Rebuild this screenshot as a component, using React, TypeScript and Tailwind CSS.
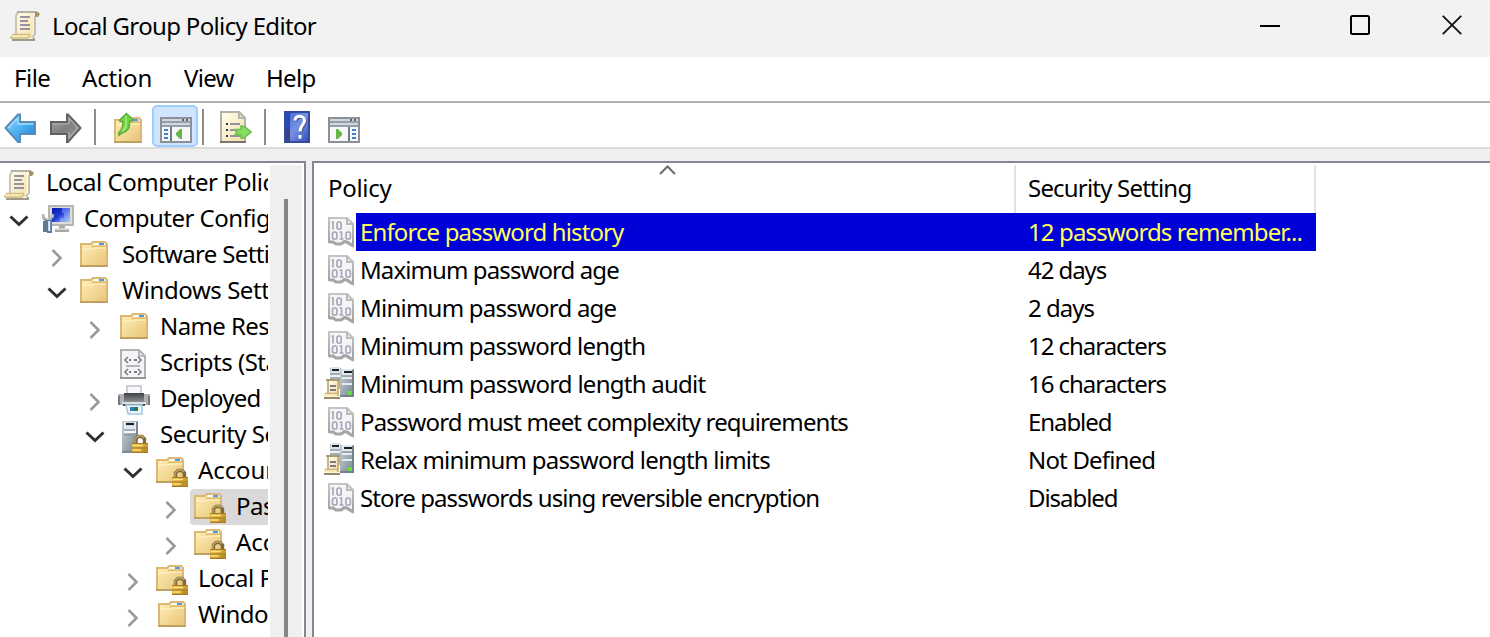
import type { ReactNode } from 'react';

type IconProps = { className?: string };

function Svg({ className = '', w = 32, h = 32, children }: IconProps & { w?: number; h?: number; children: ReactNode }) {
  return (
    <svg className={`block shrink-0 ${className}`} width={w} height={h} viewBox={`0 0 ${w} ${h}`} fill="none">
      {children}
    </svg>
  );
}

function Gradients() {
  return (
    <svg width="0" height="0" className="absolute">
      <defs>
        <linearGradient id="folder" x1="0" y1="0" x2="1" y2="1">
          <stop offset="0" stopColor="#fff0b8" />
          <stop offset="1" stopColor="#e8c478" />
        </linearGradient>
        <linearGradient id="paper" x1="0" y1="0" x2="1" y2="1">
          <stop offset="0" stopColor="#fffef0" />
          <stop offset="1" stopColor="#f5dfa4" />
        </linearGradient>
        <linearGradient id="blueArrow" x1="0" y1="0" x2="1" y2="1">
          <stop offset="0" stopColor="#9ad8fa" />
          <stop offset="0.55" stopColor="#45acf0" />
          <stop offset="1" stopColor="#2a7cd0" />
        </linearGradient>
        <linearGradient id="grayArrow" x1="0" y1="0" x2="1" y2="1">
          <stop offset="0" stopColor="#a4a4a4" />
          <stop offset="0.5" stopColor="#7f7f7f" />
          <stop offset="1" stopColor="#a0a0a0" />
        </linearGradient>
        <linearGradient id="screen" x1="0" y1="0" x2="1" y2="1">
          <stop offset="0" stopColor="#0a18a8" />
          <stop offset="0.45" stopColor="#1838d8" />
          <stop offset="1" stopColor="#b8d0ff" />
        </linearGradient>
        <linearGradient id="server" x1="0" y1="0" x2="1" y2="1">
          <stop offset="0" stopColor="#c9d2da" />
          <stop offset="1" stopColor="#76848f" />
        </linearGradient>
        <linearGradient id="help" x1="0" y1="0" x2="1" y2="1">
          <stop offset="0" stopColor="#3c62d4" />
          <stop offset="0.5" stopColor="#7791e4" />
          <stop offset="1" stopColor="#2746b8" />
        </linearGradient>
        <linearGradient id="gray" x1="0" y1="0" x2="0" y2="1">
          <stop offset="0" stopColor="#c4c4c4" />
          <stop offset="1" stopColor="#a0a0a0" />
        </linearGradient>
        <linearGradient id="gold" x1="0" y1="0" x2="1" y2="1">
          <stop offset="0" stopColor="#f0c850" />
          <stop offset="1" stopColor="#b08020" />
        </linearGradient>
        <linearGradient id="printer" x1="0" y1="0" x2="0" y2="1">
          <stop offset="0" stopColor="#3f4146" />
          <stop offset="1" stopColor="#8b8e94" />
        </linearGradient>
      </defs>
    </svg>
  );
}

function ScrollIcon({ className }: IconProps) {
  return (
    <Svg className={className}>
      <path d="M8 1H25L23 4V22L22 28H6L6 22Z" fill="url(#paper)" />
      <path d="M8 2L6 6V24" stroke="#cdc6b2" strokeWidth="2" />
      <path d="M7 2H27" stroke="#b4b1aa" strokeWidth="2" />
      <path d="M25 2H28L30 4L28 7H25Z" fill="#a8935c" />
      <path d="M25 6V24L22 28" stroke="#c2bfb8" strokeWidth="2" />
      <path d="M1 24H20V28L18 30H3L1 28Z" fill="#fbeebc" />
      <path d="M2 24.5H20M1 26V28H18L20 25" stroke="#d2bd84" strokeWidth="1.6" />
      <path d="M2 30H24V28" stroke="#9d998c" strokeWidth="2" />
      <path d="M10 7H20M10 11H18M10 15H20M10 19H20" stroke="#9692a4" strokeWidth="1.8" />
    </Svg>
  );
}

function FolderShape() {
  return (
    <>
      <path d="M1 3H11L14 1H24L26 3V25H1Z" fill="url(#folder)" />
      <path d="M1 25V3H11L13 1H25L27 3V25" stroke="#dcb872" strokeWidth="2" />
      <path d="M14 2H25V4H13Z" fill="#f9fbf8" />
      <path d="M19 2H24V4H19Z" fill="#4f97e8" />
      <path d="M12 5.5H26" stroke="#dfbb6b" strokeWidth="2" />
      <path d="M2 8H12L14 7H26" stroke="#fff0be" strokeWidth="1.5" />
      <path d="M0 25H28" stroke="#c0a060" strokeWidth="2" />
    </>
  );
}

function FolderIcon({ className }: IconProps) {
  return <Svg className={className}><FolderShape /></Svg>;
}

function Lock() {
  return (
    <>
      <path d="M19.5 21V16L22 13.5H26L28.5 16V21" stroke="#80693a" strokeWidth="3.4" />
      <path d="M19 20V16L22 13H26L28 15" stroke="#c0a668" strokeWidth="1.3" />
      <path d="M16 20H32V30H16Z" fill="url(#gold)" />
      <path d="M16 20.5H32M16 25H32M16 29.5H32" stroke="#a67a22" strokeWidth="1.2" />
      <path d="M17 22.5H27M17 27H25" stroke="#ffdf7a" strokeWidth="1.5" />
    </>
  );
}

function LockedFolderIcon({ className }: IconProps) {
  return <Svg className={className}><FolderShape /><Lock /></Svg>;
}

function ServerLockIcon({ className }: IconProps) {
  return (
    <Svg className={className}>
      <path d="M2 0H18V32H2Z" fill="url(#server)" />
      <path d="M4 1H16V10H4Z" fill="#e4e9ed" />
      <path d="M6 3H14" stroke="#151e26" strokeWidth="2.2" />
      <path d="M4 9H15M4 14H15" stroke="#8c9ba8" strokeWidth="1.5" />
      <path d="M4 11H16" stroke="#f7fafc" strokeWidth="2" />
      <path d="M17 1V16M2 31H18" stroke="#7a8894" strokeWidth="2" />
      <g transform="translate(-4 2)"><Lock /></g>
    </Svg>
  );
}

function ComputerIcon({ className }: IconProps) {
  return (
    <Svg className={className}>
      <path d="M7 1H31V20H7Z" fill="#dcdcd8" stroke="#b6b5b0" strokeWidth="2" />
      <path d="M10 3H28V17H10Z" fill="url(#screen)" />
      <path d="M20 3H28V17H18V13H22V8H20Z" fill="#a7c4ff" opacity=".4" />
      <path d="M17 21H23V24H27V27H13V24H17Z" fill="#a7a7a5" />
      <path d="M14 24H26" stroke="#e0e0df" strokeWidth="1.5" />
      <path d="M1 9V12L4 15V27M11 9V12L8 14V27" stroke="#6e767b" strokeWidth="2.5" />
      <path d="M1 9V12L4 14H8L11 11V9" stroke="#c4c9ca" strokeWidth="1.5" />
      <path d="M1 16H3V27H1ZM5 15H10V28H5Z" fill="#537da9" />
      <path d="M7.2 16V26" stroke="#e4f2ff" strokeWidth="2" />
    </Svg>
  );
}

function ScriptIcon({ className }: IconProps) {
  return (
    <Svg className={className}>
      <path d="M3 1H21L27 7V29H3Z" fill="#f4f4f6" stroke="#b0b0b0" strokeWidth="2" />
      <path d="M2 29H28" stroke="#95959a" strokeWidth="2" />
      <path d="M21 1V7H27" stroke="#b7b7b7" strokeWidth="2" />
      <path d="M10 8L7 11L10 14M20 8L23 11L20 14M10 20L7 23L10 26M20 20L23 23L20 26" stroke="#7c7c86" strokeWidth="1.6" />
      <path d="M11 11H13M16 11H19M11 23H13M16 23H19" stroke="#787882" strokeWidth="2" />
      <path d="M8 17H22" stroke="#aaa8b9" strokeWidth="1.7" />
    </Svg>
  );
}

function PrinterIcon({ className }: IconProps) {
  return (
    <Svg className={className}>
      <path d="M9 1H23V11H9Z" fill="#f8f8fb" stroke="#cfd0d3" strokeWidth="2" />
      <path d="M0 9H7V8H25V9H32V20H0Z" fill="#aeb0b3" />
      <path d="M6 8H26V17H6Z" fill="url(#printer)" />
      <path d="M1 11V20M31 11V20" stroke="#75787d" strokeWidth="2" />
      <path d="M4 18H28" stroke="#dedfe2" strokeWidth="2" />
      <path d="M5 20H27" stroke="#4b4e55" strokeWidth="2" />
      <path d="M8 20H24V29H10Z" fill="#eff7fd" stroke="#a7cadf" strokeWidth="1.6" />
      <path d="M12 22H16V26H12Z" fill="#2b80c4" /><path d="M16 22H20V26H16Z" fill="#287b58" />
    </Svg>
  );
}

function BinaryIcon({ className }: IconProps) {
  return (
    <Svg className={className} w={28}>
      <path d="M1 1H19L25 7V29L20 25L16 24L13 27H8L5 25H1Z" fill="#f5f5f6" stroke="url(#gray)" strokeWidth="2" />
      <path d="M19 1V7H25" stroke="#bababa" strokeWidth="2" />
      <path d="M1 25H5L8 27H13L17 24.5L20 26L25 29" stroke="#a6a6a6" strokeWidth="3" />
      <g stroke="#a6a4b8" strokeWidth="1.6">
        <path d="M3.5 5H5V12.5" />
        <rect x="9" y="5" width="4.2" height="7" rx="1.8" />
        <rect x="4.5" y="15" width="4.4" height="7" rx="1.8" />
        <path d="M11.5 15H13.5V22M11.5 22H15.5" />
        <rect x="18" y="15" width="4.4" height="7" rx="1.8" />
      </g>
    </Svg>
  );
}

function TowersIcon({ className }: IconProps) {
  return (
    <Svg className={className}>
      <path d="M6 1H17V22H6Z" fill="#a9b4bb" />
      <path d="M7 0H16V9H6Z" fill="#dce2e5" />
      <path d="M8 3H15" stroke="#17232c" strokeWidth="2" />
      <path d="M6 7H16M6 11H16" stroke="#a2adb5" strokeWidth="2" />
      <path d="M6 9H16" stroke="#eef3f5" strokeWidth="2" />
      <path d="M16 2H30V30H16Z" fill="url(#server)" />
      <path d="M18 2H28V9H18Z" fill="#e3e8eb" />
      <path d="M20 5H28" stroke="#15212a" strokeWidth="2" />
      <path d="M18 9H28" stroke="#98a5ae" strokeWidth="1.8" />
      <path d="M18 11H28M18 17H28" stroke="#e5ebef" strokeWidth="1.8" />
      <path d="M29 3V29M16 29H30" stroke="#73818b" strokeWidth="2" />
      <path d="M24 24H28V28H24Z" fill="#63e340" />
      <path d="M4 13H14V28H4Z" fill="url(#paper)" stroke="#c8b582" strokeWidth="2" />
      <path d="M2 13H16" stroke="#aa9b75" strokeWidth="2" />
      <path d="M0 28H13" stroke="#fbeab5" strokeWidth="3" />
      <path d="M0 31H16" stroke="#96896a" strokeWidth="2" />
      <path d="M1 26.3H13" stroke="#c2ac74" strokeWidth="1.2" />
      <path d="M6 19H12M6 23H12" stroke="#817a84" strokeWidth="1.8" />
    </Svg>
  );
}

function BackIcon({ className }: IconProps) {
  return <Svg className={className}><path d="M1.5 16L14 2.5H16V10H31V22H16V30H14Z" fill="url(#blueArrow)" stroke="#5a8cb8" strokeWidth="2" /><path d="M4 16L14 6V12H29" stroke="#a6dcfc" strokeWidth="1.3" /></Svg>;
}

function ForwardIcon({ className }: IconProps) {
  return <Svg className={className}><path d="M30.5 16L18 2.5H17V10H1V22H17V30H18Z" fill="url(#grayArrow)" stroke="#626262" strokeWidth="2" /><path d="M3 12H19V6L28 16L19 26V20" stroke="#b0b0b0" strokeWidth="1.2" /></Svg>;
}

function UpFolderIcon({ className }: IconProps) {
  return (
    <Svg className={className} w={30}>
      <g transform="translate(0 5)"><FolderShape /></g>
      <path d="M12.5 1.5L18.5 7V9H15.5V13C15.5 18 11 20 8 21L5 23.5L4.5 21C8 18 9 15 9 9.5H6V7.5Z" fill="#72d34a" stroke="#5cac40" strokeWidth="1.4" />
      <path d="M12 4V12C12 15 10 18 8 19" stroke="#9ce976" strokeWidth="1.8" />
    </Svg>
  );
}

function ConsoleIcon({ className, action = false }: IconProps & { action?: boolean }) {
  return (
    <Svg className={className} h={26}>
      <path d="M1 1H31V25H1Z" fill="#f5f7f9" stroke="#8c9199" strokeWidth="2" />
      <path d="M2 3H30M2 7H30" stroke="#d0d7df" strokeWidth="2" />
      <path d="M2 5H30M2 9H30" stroke="#77828f" strokeWidth="1.7" />
      <path d="M22 3H24M26 3H28" stroke="#56606e" strokeWidth="2" />
      {action ? (
        <>
          <path d="M21 10V24" stroke="#717b87" strokeWidth="2" />
          <path d="M24 13H28M24 17H28M24 21H28" stroke="#477fc0" strokeWidth="2" />
          <path d="M8 12V22H10L14 18V16L10 12Z" fill="#66b84a" />
        </>
      ) : (
        <>
          <path d="M11 10V24" stroke="#717b87" strokeWidth="2" />
          <path d="M4 13H8M4 17H8M4 21H8" stroke="#477fc0" strokeWidth="2" />
          <path d="M22 12V22H20L16 18V16L20 12Z" fill="#66b84a" />
        </>
      )}
    </Svg>
  );
}

function ExportIcon({ className }: IconProps) {
  return (
    <Svg className={className}>
      <path d="M1 1H19L25 7V31H1Z" fill="url(#paper)" stroke="#b2b0a9" strokeWidth="2" />
      <path d="M0 31H26" stroke="#77756c" strokeWidth="2" />
      <path d="M19 1V7H25" stroke="#b8b7b2" strokeWidth="2" />
      <path d="M10 13H20M10 19H16M10 25H20" stroke="#9692a6" strokeWidth="2" />
      <path d="M6 13H8M6 19H8M6 25H8" stroke="#38363e" strokeWidth="2" />
      <path d="M15 18.5H21V15L25 16L31 21L24 27H21V24H15L17 21.5Z" fill="#84df5d" stroke="#6cbc50" strokeWidth="1.6" />
    </Svg>
  );
}

function HelpIcon({ className }: IconProps) {
  return (
    <Svg className={className} w={26}>
      <path d="M0 0H26V32H0Z" fill="url(#help)" />
      <path d="M0 0H6V32H0Z" fill="#2747b5" /><path d="M0 18H6V32H0Z" fill="#3b427e" />
      <path d="M1 1H25V31H1Z" stroke="#314a9e" strokeWidth="2" />
      <path d="M11 9.5C11 3.5 20.500 4 20.500 9.500C20.500 14 16 14 16 20.500" stroke="#515d95" strokeWidth="3" transform="translate(1 1)" />
      <path d="M11 9.5C11 3.5 20.500 4 20.500 9.500C20.500 14 16 14 16 20.500M16 24V27.500" stroke="#fff" strokeWidth="3" />
    </Svg>
  );
}

function Toggle({ open }: { open?: boolean }) {
  if (open === undefined) return null;
  return open ? (
    <svg className="mt-[13px] block" width="20" height="14" viewBox="0 0 20 14" fill="none"><path d="M1.5 2.5L10 10.5L18.5 2.5" stroke="#303030" strokeWidth="3" /></svg>
  ) : (
    <svg className="ml-[4px] mt-[12px] block" width="12" height="18" viewBox="0 0 12 18" fill="none"><path d="M1.500 1L9.500 9L1.500 17" stroke="#9a9a9a" strokeWidth="2.6" /></svg>
  );
}

type TreeItem = { label: string; icon: ReactNode; open?: boolean; indent: string; track: string; selected?: boolean };

const tree: TreeItem[] = [
  { label: 'Local Computer Policy', icon: <ScrollIcon />, indent: 'pl-[4px]', track: 'tracking-[-0.5px]' },
  { label: 'Computer Configuration', icon: <ComputerIcon />, open: true, indent: 'pl-[9px]', track: 'tracking-[-0.5px]' },
  { label: 'Software Settings', icon: <FolderIcon />, open: false, indent: 'pl-[47px]', track: 'tracking-[-0.65px]' },
  { label: 'Windows Settings', icon: <FolderIcon />, open: true, indent: 'pl-[47px]', track: 'tracking-[-0.45px]' },
  { label: 'Name Resolution Policy', icon: <FolderIcon className="translate-x-[2px]" />, open: false, indent: 'pl-[85px]', track: 'tracking-[-0.6px]' },
  { label: 'Scripts (Startup/Shutdown)', icon: <ScriptIcon />, indent: 'pl-[118px]', track: 'tracking-[-0.5px]' },
  { label: 'Deployed Printers', icon: <PrinterIcon />, open: false, indent: 'pl-[85px]', track: 'tracking-[-0.75px]' },
  { label: 'Security Settings', icon: <ServerLockIcon className="translate-x-[2px]" />, open: true, indent: 'pl-[85px]', track: 'tracking-[-0.5px]' },
  { label: 'Account Policies', icon: <LockedFolderIcon />, open: true, indent: 'pl-[123px]', track: 'tracking-[-0.1px]' },
  { label: 'Password Policy', icon: <LockedFolderIcon />, open: false, indent: 'pl-[161px]', track: 'tracking-[-0.5px]', selected: true },
  { label: 'Account Lockout Policy', icon: <LockedFolderIcon />, open: false, indent: 'pl-[161px]', track: 'tracking-[-0.1px]' },
  { label: 'Local Policies', icon: <LockedFolderIcon />, open: false, indent: 'pl-[123px]', track: 'tracking-[-0.5px]' },
  { label: 'Windows Defender Firewall', icon: <FolderIcon className="translate-x-[2px]" />, open: false, indent: 'pl-[123px]', track: 'tracking-[-0.5px]' },
];

type Policy = { name: string; value: string; nt: string; vt: string; tower?: boolean; selected?: boolean };

const policies: Policy[] = [
  { name: 'Enforce password history', value: '12 passwords remember...', nt: 'tracking-[-0.88px]', vt: 'tracking-[-0.88px]', selected: true },
  { name: 'Maximum password age', value: '42 days', nt: 'tracking-[-0.9px]', vt: 'tracking-[-1.07px]' },
  { name: 'Minimum password age', value: '2 days', nt: 'tracking-[-0.77px]', vt: 'tracking-[-1px]' },
  { name: 'Minimum password length', value: '12 characters', nt: 'tracking-[-0.76px]', vt: 'tracking-[-1.04px]' },
  { name: 'Minimum password length audit', value: '16 characters', nt: 'tracking-[-0.74px]', vt: 'tracking-[-1.04px]', tower: true },
  { name: 'Password must meet complexity requirements', value: 'Enabled', nt: 'tracking-[-0.86px]', vt: 'tracking-[-1.07px]' },
  { name: 'Relax minimum password length limits', value: 'Not Defined', nt: 'tracking-[-0.78px]', vt: 'tracking-[-0.82px]', tower: true },
  { name: 'Store passwords using reversible encryption', value: 'Disabled', nt: 'tracking-[-0.9px]', vt: 'tracking-[-1.05px]' },
];

export default function App() {
  return (
    <div className="flex h-[637px] w-[1490px] flex-col overflow-hidden whitespace-nowrap bg-[#efefef] font-['Noto_Sans','Open_Sans',sans-serif] text-[24px] text-black">
      <Gradients />
      <header className="flex h-[57px] shrink-0 bg-[#f2f2f2]">
        <ScrollIcon className="ml-[10px] mt-[10px]" />
        <h1 className="ml-[10px] mt-[7px] leading-[38px] tracking-[-0.66px]">Local Group Policy Editor</h1>
        <div className="ml-auto mr-[28px] mt-[15px] flex">
          <Svg w={20} h={20}><path d="M0 11H20" stroke="#000" strokeWidth="2" /></Svg>
          <Svg className="ml-[70px]" w={20} h={20}><rect x="1" y="1" width="18" height="18" rx="1.5" stroke="#000" strokeWidth="2" /></Svg>
          <Svg className="ml-[72px]" w={20} h={20}><path d="M.8.8L19.2 19.2M19.2.8L.8 19.2" stroke="#111" strokeWidth="1.8" /></Svg>
        </div>
      </header>
      <nav className="flex h-[44px] shrink-0 bg-white pl-[14px] pt-[2px] leading-[38px]">
        <span className="w-[68px] tracking-[-0.5px]">File</span>
        <span className="w-[102px] tracking-[-0.15px]">Action</span>
        <span className="w-[82px] tracking-[-0.7px]">View</span>
        <span className="tracking-[-0.7px]">Help</span>
      </nav>
      <div className="flex h-[48px] shrink-0 border-y-2 border-b-[#dcdcdc] border-t-[#b0b0b2] bg-white">
        <BackIcon className="ml-[4px] mt-[9px]" />
        <ForwardIcon className="ml-[14px] mt-[9px]" />
        <div className="ml-[12px] mt-[6px] h-[36px] w-[2px] bg-[#8c8c8c]" />
        <UpFolderIcon className="ml-[18px] mt-[9px]" />
        <div className="ml-[8px] mt-[2px] h-[42px] w-[46px] rounded-[5px] border-2 border-[#a0cefc] bg-[#d0e5fd] pl-[6px] pt-[10px]"><ConsoleIcon /></div>
        <div className="ml-[4px] mt-[6px] h-[36px] w-[2px] bg-[#8c8c8c]" />
        <ExportIcon className="ml-[16px] mt-[8px]" />
        <div className="ml-[12px] mt-[6px] h-[36px] w-[2px] bg-[#8c8c8c]" />
        <HelpIcon className="ml-[18px] mt-[8px]" />
        <ConsoleIcon className="ml-[18px] mt-[14px]" action />
      </div>
      <main className="flex grow gap-[6px] pt-[12px]">
        <aside className="flex h-[476px] w-[306px] shrink-0 border-r-2 border-t-2 border-[#828790] bg-white pt-[2px]">
          <div className="h-full w-[268px] overflow-hidden">
            {tree.map((item) => (
              <div key={item.label} className={`flex h-[36px] ${item.indent}`}>
                {item.open !== undefined && <div className="w-[33px] shrink-0"><Toggle open={item.open} /></div>}
                <div className={`-ml-[4px] flex h-[36px] grow rounded-l-[4px] pl-[4px] pt-[4px] ${item.selected ? 'bg-[#d9d9d9]' : ''}`}>
                  {item.icon}
                  <span className={`-mt-[4px] ml-[10px] leading-[34px] ${item.track}`}>{item.label}</span>
                </div>
              </div>
            ))}
          </div>
          <div className="ml-[2px] h-full w-[32px] bg-[#efefef] pl-[14px] pt-[34px]"><div className="h-full w-[4px] bg-[#868686]" /></div>
        </aside>
        <section className="h-[476px] grow border-l-2 border-t-2 border-[#828790] bg-white">
          <div className="relative flex h-[50px] pt-[2px] leading-[46px]">
            <span className="w-[702px] border-r-2 border-[#e3e3e3] pl-[14px] tracking-[-0.3px]">Policy</span>
            <span className="w-[300px] border-r-2 border-[#e3e3e3] pl-[12px] tracking-[-0.8px]">Security Setting</span>
            <svg className="absolute left-[345px] top-[2px]" width="18" height="10" viewBox="0 0 18 10" fill="none"><path d="M1 9L8.5 1.5L16 9" stroke="#6b6b6b" strokeWidth="2" /></svg>
          </div>
          {policies.map((p) => (
            <div key={p.name} className="flex h-[38px]">
              <div className="w-[42px] shrink-0">
                {p.tower ? <TowersIcon className="ml-[10px] mt-[2px]" /> : <BinaryIcon className="ml-[14px] mt-[4px]" />}
              </div>
              <div className={`flex w-[960px] pl-[4px] leading-[38px] ${p.selected ? 'bg-[#0000d8] text-[#ffff58]' : ''}`}>
                <span className={`w-[668px] ${p.nt}`}>{p.name}</span>
                <span className={p.vt}>{p.value}</span>
              </div>
            </div>
          ))}
        </section>
      </main>
    </div>
  );
}
